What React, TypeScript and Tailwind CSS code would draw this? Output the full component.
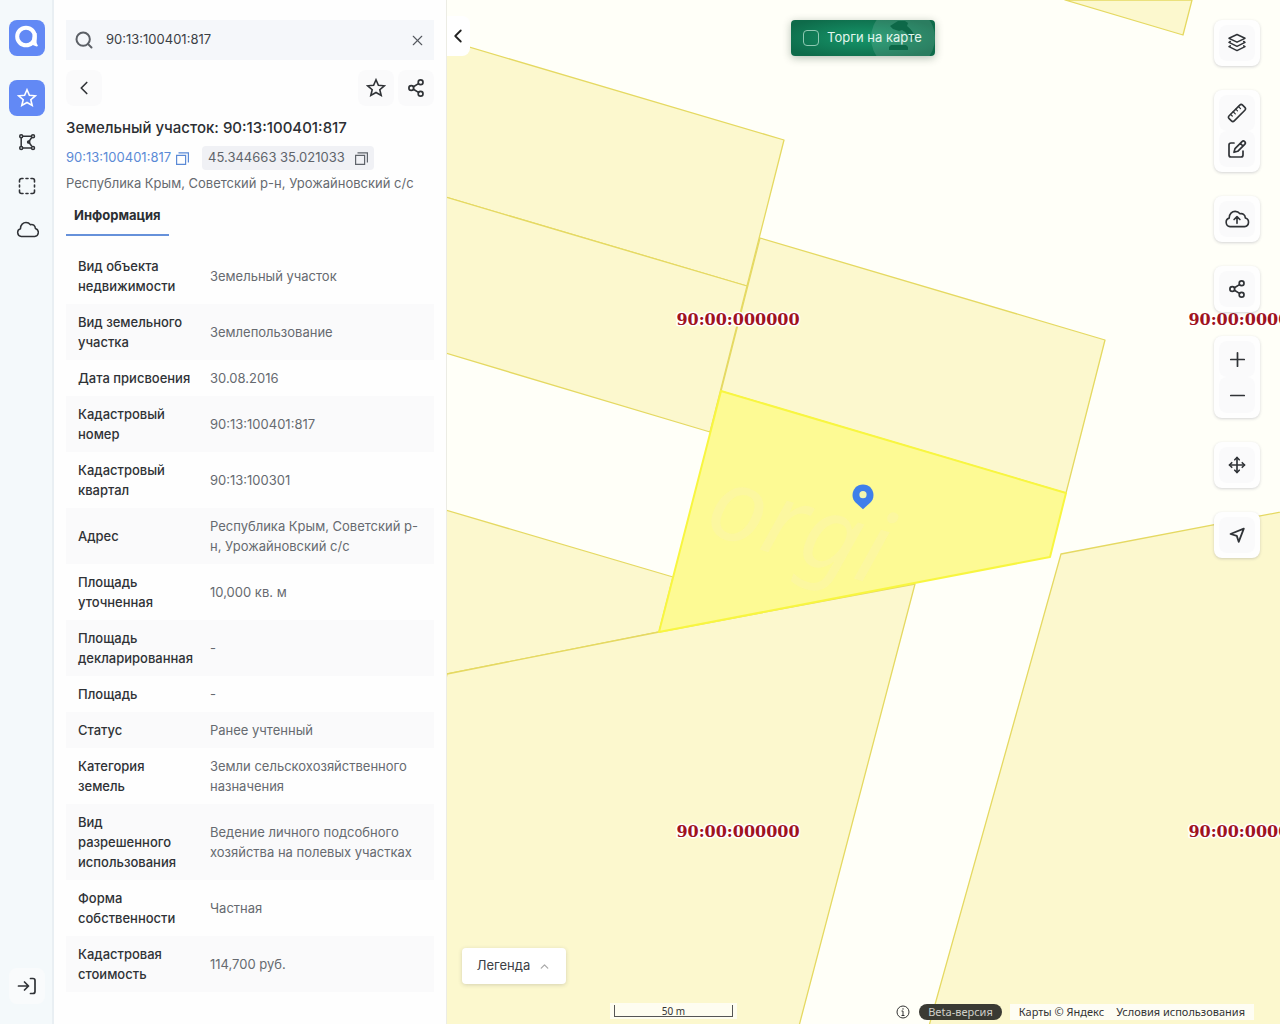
import React from "react";
import { ChevronLeft, ChevronUp, Minus, Move, Plus, Search, X } from "lucide-react";

interface InfoRow {
  label: string;
  value: string;
}

const infoRows: InfoRow[] = [
  { label: "Вид объекта недвижимости", value: "Земельный участок" },
  { label: "Вид земельного участка", value: "Землепользование" },
  { label: "Дата присвоения", value: "30.08.2016" },
  { label: "Кадастровый номер", value: "90:13:100401:817" },
  { label: "Кадастровый квартал", value: "90:13:100301" },
  { label: "Адрес", value: "Республика Крым, Советский р-н, Урожайновский с/с" },
  { label: "Площадь уточненная", value: "10,000 кв. м" },
  { label: "Площадь декларированная", value: "-" },
  { label: "Площадь", value: "-" },
  { label: "Статус", value: "Ранее учтенный" },
  { label: "Категория земель", value: "Земли сельскохозяйственного назначения" },
  {
    label: "Вид разрешенного использования",
    value: "Ведение личного подсобного хозяйства на полевых участках",
  },
  { label: "Форма собственности", value: "Частная" },
  { label: "Кадастровая стоимость", value: "114,700 руб." },
];

const parcels = [
  "619,0 737,35 746,0",
  "-4,39 338,140 301,286 -4,196",
  "-4,196 301,286 264,432 -4,352",
  "-4,509 227,577 213,632 1,674 -4,700",
  "314,238 659,340 620,493 275,391",
  "1,674 213,632 469,584 353,1026 -4,1026 -4,700",
  "615,554 1400,404 1400,1026 483,1026",
];

const quarterLabels = [
  { x: 292, y: 325 },
  { x: 804, y: 325 },
  { x: 292, y: 837 },
  { x: 804, y: 837 },
];

const iconStroke = {
  fill: "none",
  stroke: "currentColor",
  strokeLinecap: "round",
  strokeLinejoin: "round",
} as const;

const Logo = () => (
  <svg width="36" height="36" viewBox="0 0 36 36" aria-hidden="true">
    <rect width="36" height="36" rx="8" fill="#6289f5" />
    <circle cx="17" cy="16.5" r="8.8" fill="none" stroke="#fff" strokeWidth="4" />
    <path d="M24 13h3.600v10l1.400 3-1.500.5-5-2z" fill="#fff" />
  </svg>
);

const StarIcon = () => (
  <svg width="20" height="20" viewBox="0 0 20 20" fill="none" stroke="currentColor" strokeWidth="1.6">
    <path d="M10 1.800 12.400 7.300 18.300 7.800 13.800 11.700 15.200 17.500 10 14.500 4.800 17.500 6.200 11.700 1.700 7.800 7.600 7.300z" />
  </svg>
);

const ShareIcon = () => (
  <svg width="16" height="18" viewBox="0 0 16 18" {...iconStroke} strokeWidth="1.7">
    <circle cx="3.300" cy="9" r="2.400" />
    <circle cx="12.600" cy="3.300" r="2.400" />
    <circle cx="12.600" cy="14.700" r="2.400" />
    <path d="M5.400 7.800 10.500 4.600M5.400 10.200l5.100 3.200" />
  </svg>
);

const PolygonIcon = () => (
  <svg width="18" height="18" viewBox="0 0 18 18" fill="none" stroke="currentColor" strokeWidth="1.5">
    <path d="M4.600 3.200h8.800M3.200 4.600v8.800M4.600 15h8.800M13.700 4.500 10.600 9l3.200 4.300" />
    <circle cx="3.200" cy="3.200" r="1.500" />
    <circle cx="15" cy="3.200" r="1.500" />
    <circle cx="3.200" cy="15" r="1.500" />
    <circle cx="15" cy="15" r="1.500" />
    <circle cx="10.700" cy="9" r="1.100" />
  </svg>
);

const SelectionIcon = () => (
  <svg width="18" height="18" viewBox="0 0 18 18" {...iconStroke} strokeWidth="1.6">
    <path d="M1.500 5V3.500a2 2 0 0 1 2-2H5M13 1.500h1.500a2 2 0 0 1 2 2V5M16.500 13v1.500a2 2 0 0 1-2 2H13M5 16.500H3.500a2 2 0 0 1-2-2V13" />
    <path d="M8 1.500h2M8 16.500h2M1.500 8v2M16.500 8v2" />
  </svg>
);

const cloudPath =
  "M5.300 16.500a4 4 0 0 1-.8-7.800C4.400 4.700 7.200 2.500 10 2.500c1.900 0 3.300.7 4.500 2.200 2.300-.8 4.800.9 4.900 3.800a4.100 4.100 0 0 1-.7 8z";

const CloudIcon = () => (
  <svg width="24" height="20" viewBox="-1 0 24 20" {...iconStroke} strokeWidth="1.5">
    <path d={cloudPath} />
  </svg>
);

const CloudUploadIcon = () => (
  <svg width="26" height="22" viewBox="-.3 -.5 24 20" {...iconStroke} strokeWidth="1.5">
    <path d={cloudPath} />
    <path d="M11.700 13.500v-6M9 10l2.700-2.700 2.700 2.700" />
  </svg>
);

const LoginIcon = () => (
  <svg width="20" height="18" viewBox="0 0 20 18" {...iconStroke} strokeWidth="1.7">
    <path d="M1.500 9h10M7.500 5l4 4-4 4M13.500 1.500h2.500a2 2 0 0 1 2 2v11a2 2 0 0 1-2 2h-2.500" />
  </svg>
);

const CopyIcon = () => (
  <svg width="13" height="13" viewBox="0 0 13 13" fill="none" stroke="currentColor" strokeWidth="1.2">
    <path d="M.6 3.400h9v9h-9zM2.500.8h9.900v9.700" />
  </svg>
);

const LayersIcon = () => (
  <svg width="20" height="20" viewBox="0 0 20 20" {...iconStroke} strokeWidth="1.500">
    <path d="M10 1.500 18 5.300 10 9.200 2 5.300z" />
    <path d="M3.300 8.500 2 9.300l8 4 8-4-1.300-.8" />
    <path d="M3.300 12.800 2 13.600l8 4 8-4-1.300-.8" />
  </svg>
);

const RulerIcon = () => (
  <svg width="20" height="20" viewBox="0 0 20 20" {...iconStroke} strokeWidth="1.600">
    <g transform="rotate(-45 10 10)">
      <rect x="0.500" y="6.400" width="19" height="7.200" rx="2" />
      <path d="M4.500 6.400v2.400M8.200 6.400v3M11.900 6.400v2.400M15.600 6.400v3" strokeWidth="1.200" />
    </g>
  </svg>
);

const EditIcon = () => (
  <svg width="20" height="20" viewBox="0 0 20 20" {...iconStroke} strokeWidth="1.700">
    <path d="M7 4H4a2 2 0 0 0-2 2v10a2 2 0 0 0 2 2h10a2 2 0 0 0 2-2v-4" />
    <path d="M7 13.300l1-3.700 7-7a1.900 1.900 0 0 1 2.700 2.700l-7 7zM13.300 4.300 16 7" />
  </svg>
);

const LocateIcon = () => (
  <svg width="18" height="18" viewBox="0 0 18 18" {...iconStroke} strokeWidth="1.800">
    <path d="M15.800 2.700 2.500 8l6.300 1.900L10.700 15.800z" />
  </svg>
);

const railButton = "flex size-9 items-center justify-center rounded-lg";
const squareButton = "flex size-9 items-center justify-center rounded-lg bg-[#fafafb]";

const Rail = () => (
  <nav className="flex w-[54px] shrink-0 flex-col items-center border-r-2 border-[#e9eff3] bg-[#f4f9fb] py-5 pl-[2px] text-[#303337]">
    <a href="#" aria-label="Главная" className="mb-6">
      <Logo />
    </a>
    <div className="flex flex-col gap-2">
      <button aria-label="Избранное" className={`${railButton} bg-[#6289f5] text-white`}>
        <StarIcon />
      </button>
      <button aria-label="Контур" className={railButton}>
        <PolygonIcon />
      </button>
      <button aria-label="Выделение" className={railButton}>
        <SelectionIcon />
      </button>
      <button aria-label="Облако" className={railButton}>
        <CloudIcon />
      </button>
    </div>
    <button aria-label="Войти" className={`${railButton} mt-auto bg-[#f9fbfc]`}>
      <LoginIcon />
    </button>
  </nav>
);

const InfoPanel = () => (
  <aside className="relative z-10 w-[392px] shrink-0 overflow-y-auto bg-[#fefefe] px-3 pt-5 pb-5 text-[#303337] shadow-[1px_0_0_#ecece4]">
    <div className="flex h-10 items-center bg-[#f5f7fa] px-2">
      <Search size={20} color="#5c6066" strokeWidth={2.4} />
      <input
        aria-label="Поиск"
        defaultValue="90:13:100401:817"
        className="ml-3 min-w-0 flex-1 bg-transparent text-[13px] text-[#3c4045] outline-none"
      />
      <button aria-label="Очистить">
        <X size={17} color="#55595f" strokeWidth={1.6} />
      </button>
    </div>

    <div className="mt-[10px] flex gap-1">
      <button aria-label="Назад" className={`${squareButton} mr-auto`}>
        <ChevronLeft size={22} strokeWidth={1.8} />
      </button>
      <button aria-label="В избранное" className={squareButton}>
        <StarIcon />
      </button>
      <button aria-label="Поделиться" className={squareButton}>
        <ShareIcon />
      </button>
    </div>

    <h1 className="mt-3 text-[15px] leading-5 font-medium text-[#2c2f33]">
      Земельный участок: 90:13:100401:817
    </h1>
    <div className="mt-2 flex h-6 items-center text-[13px]">
      <a href="#" className="text-[#5b8ad6]">
        90:13:100401:817
      </a>
      <button aria-label="Скопировать номер" className="ml-[5px] flex text-[#5b8ad6]">
        <CopyIcon />
      </button>
      <div className="ml-[13px] flex h-6 items-center rounded-sm bg-[#f0f1f5] px-[6px] text-[#5f646b]">
        45.344663 35.021033
        <button aria-label="Скопировать координаты" className="ml-[10px] flex">
          <CopyIcon />
        </button>
      </div>
    </div>
    <p className="mt-[3px] text-[13px] leading-5 text-[#666a70]">
      Республика Крым, Советский р-н, Урожайновский с/с
    </p>
    <div role="tablist" className="mt-1 flex">
      <button
        role="tab"
        aria-selected="true"
        className="h-[39px] border-b-2 border-[#6691da] px-2 text-[13px] font-bold text-[#2c2f33]"
      >
        Информация
      </button>
    </div>

    <table className="mt-3 w-full table-fixed text-left text-[13px] leading-5">
      <tbody>
        {infoRows.map((row) => (
          <tr key={row.label} className="even:bg-[#fafafb]">
            <th scope="row" className="w-[132px] py-2 pr-1 pl-3 font-medium text-[#2f3236]">
              {row.label}
            </th>
            <td className="px-3 py-2 text-[#666a70]">{row.value}</td>
          </tr>
        ))}
      </tbody>
    </table>
  </aside>
);

const MapCanvas = () => (
  <svg
    className="absolute inset-0 h-full w-full"
    viewBox="0 0 834 1024"
    preserveAspectRatio="xMinYMin slice"
    aria-label="Кадастровая карта"
  >
    <rect width="1400" height="1024" fill="#fffff8" />
    <g fill="#fcf8ce" stroke="#e5d962" strokeWidth="1.3" strokeLinejoin="round">
      {parcels.map((points) => (
        <polygon key={points} points={points} />
      ))}
    </g>
    <polygon
      points="275,391 620,493 604,557 213,632"
      fill="#fdfa94"
      stroke="#f8f640"
      strokeWidth="2"
      strokeLinejoin="round"
    />
    <text
      transform="translate(256 532) rotate(17)"
      fill="#fbf4b0"
      fillOpacity="0.45"
      fontSize="102"
      fontStyle="italic"
      fontFamily="Noto Sans, sans-serif"
    >
      orgi
    </text>
    {/* marker */}
    <path
      d="M417 484.500c-6 0-10.500 4.700-10.500 10.500 0 3 1.200 5.600 3.100 7.400l7.400 6.900 7.400-6.900c1.900-1.800 3.100-4.400 3.100-7.400 0-5.800-4.500-10.500-10.500-10.500z"
      fill="#3f7fea"
    />
    <circle cx="417" cy="494.700" r="3.600" fill="#f4f7b0" />
    <g
      fill="#a01220"
      stroke="#fff"
      strokeWidth="3"
      strokeLinejoin="round"
      paintOrder="stroke"
      fontSize="16"
      fontWeight="700"
      fontFamily="DejaVu Serif, serif"
      textAnchor="middle"
    >
      {quarterLabels.map(({ x, y }) => (
        <text key={`${x}-${y}`} x={x} y={y}>
          90:00:000000
        </text>
      ))}
    </g>
  </svg>
);

interface ToolProps {
  label: string;
  children: React.ReactNode;
}

const Tool: React.FC<ToolProps> = ({ label, children }) => (
  <button aria-label={label} className={squareButton}>
    {children}
  </button>
);

const ToolCard: React.FC<{ children: React.ReactNode }> = ({ children }) => (
  <div className="rounded-lg bg-[#fefefe] p-[5px] shadow-[0_1px_3px_rgba(60,60,90,0.22)]">
    {children}
  </div>
);

const MapTools = () => (
  <div className="absolute top-5 right-5 flex flex-col gap-6 text-[#303337]">
    <ToolCard>
      <Tool label="Слои">
        <LayersIcon />
      </Tool>
    </ToolCard>
    <ToolCard>
      <Tool label="Линейка">
        <RulerIcon />
      </Tool>
      <Tool label="Редактировать">
        <EditIcon />
      </Tool>
    </ToolCard>
    <ToolCard>
      <Tool label="Загрузить">
        <CloudUploadIcon />
      </Tool>
    </ToolCard>
    <ToolCard>
      <Tool label="Поделиться картой">
        <ShareIcon />
      </Tool>
    </ToolCard>
    <ToolCard>
      <Tool label="Приблизить">
        <Plus size={23} strokeWidth={1.8} />
      </Tool>
      <Tool label="Отдалить">
        <Minus size={23} strokeWidth={1.8} />
      </Tool>
    </ToolCard>
    <ToolCard>
      <Tool label="Переместить">
        <Move size={18} strokeWidth={2.2} />
      </Tool>
    </ToolCard>
    <ToolCard>
      <Tool label="Моё местоположение">
        <LocateIcon />
      </Tool>
    </ToolCard>
  </div>
);

const AuctionToggle = () => (
  <label className="absolute top-5 left-1/2 flex h-9 w-36 -translate-x-1/2 items-center overflow-hidden rounded-sm bg-[radial-gradient(ellipse_at_center,#16966a_0%,#0e6b4a_85%)] pl-3 shadow-[0_2px_8px_rgba(0,40,20,0.3)]">
    <svg className="absolute top-0 right-0" width="64" height="36" viewBox="0 0 64 36" aria-hidden="true">
      <circle cx="32" cy="18" r="32" fill="#fff" fillOpacity="0.12" />
      <path
        d="M27 1h7l3 2-1 3c4 3 7 7 8 12l-3 2c-3-4-6-8-10-10l-3 1-6-2-3-3zM18 30v-3l2-2h15l2 2v3z"
        fill="#0d6848"
      />
    </svg>
    <input
      type="checkbox"
      className="relative size-4 appearance-none rounded-[4px] border border-[#8fc9b2]"
    />
    <span className="relative ml-2 text-[13px] text-[#e3f5ed]">Торги на карте</span>
  </label>
);

const MapFooter = () => (
  <div className="absolute right-[26px] bottom-1 flex h-4 items-center font-['Noto_Sans',sans-serif] text-[11px] text-[#333]">
    <svg width="14" height="14" viewBox="0 0 14 14" fill="none" stroke="#333">
      <circle cx="7" cy="7" r="6" />
      <path d="M7 3.200v1.500M5.500 6H7v4.500M5.500 10.500h3" />
    </svg>
    <span className="ml-[9px] flex h-4 items-center rounded-full bg-[#3a3a33] px-[9px] text-[#cfcfc8]">
      Beta-версия
    </span>
    <div className="ml-2 flex h-4 items-center gap-3 bg-white/75 px-[9px]">
      <span>Карты © Яндекс</span>
      <a href="#">Условия использования</a>
    </div>
  </div>
);

const MapView = () => (
  <main className="relative min-w-0 flex-1 overflow-hidden bg-[#fffff8]">
    <MapCanvas />
    <button
      aria-label="Свернуть панель"
      className="absolute top-4 left-0 flex h-10 w-6 items-center justify-center rounded-r-lg bg-white"
    >
      <ChevronLeft size={22} color="#222" strokeWidth={2} />
    </button>
    <AuctionToggle />
    <MapTools />
    <button className="absolute bottom-10 left-4 flex h-9 w-[104px] items-center justify-center gap-2 rounded-sm bg-white text-[13px] text-[#3c4045] shadow-[0_1px_4px_rgba(60,60,60,0.2)]">
      Легенда
      <ChevronUp size={13} color="#aaa" strokeWidth={2.4} />
    </button>
    <div className="absolute bottom-[5px] left-[164px] bg-white/70 px-1 py-[2px]">
      <div className="flex h-3 w-[119px] items-center justify-center border border-t-0 border-[#555] font-['Noto_Sans',sans-serif] text-[10px] leading-none text-[#333]">
        50 m
      </div>
    </div>
    <MapFooter />
  </main>
);

const App = () => {
  return (
    <div className="flex h-screen font-['Inter',sans-serif]">
      <Rail />
      <InfoPanel />
      <MapView />
    </div>
  );
};

export default App;
